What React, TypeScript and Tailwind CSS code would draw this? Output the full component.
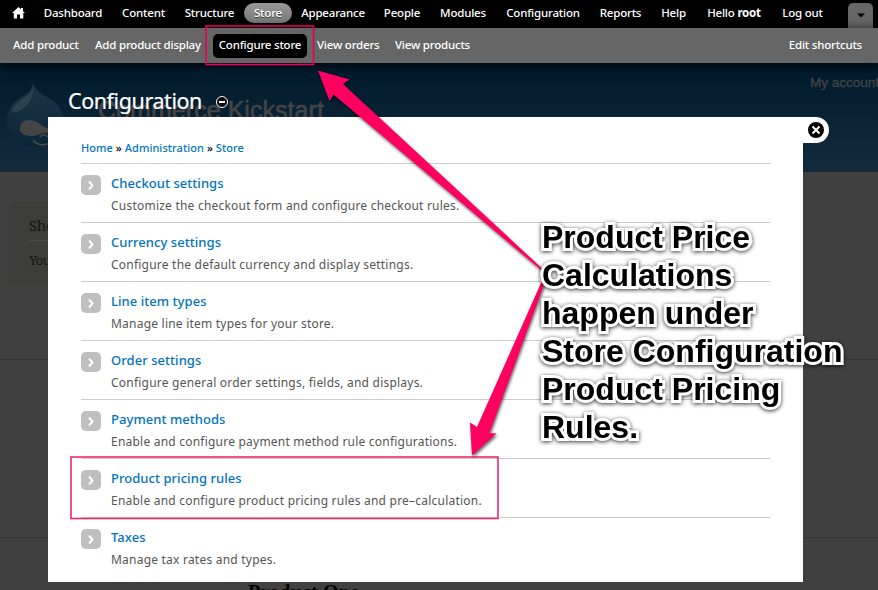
import React from "react";

const nav: [string, string][] = [
  ["Dashboard", "w-[78px]"],
  ["Content", "w-[63px]"],
  ["Structure", "w-[69px]"],
  ["Store", "w-[48px]"],
  ["Appearance", "w-[82px]"],
  ["People", "w-[56px]"],
  ["Modules", "w-[66px]"],
  ["Configuration", "w-[94px]"],
  ["Reports", "w-[61px]"],
  ["Help", "w-[45px]"],
];

const rows: [string, string][] = [
  ["Checkout settings", "Customize the checkout form and configure checkout rules."],
  ["Currency settings", "Configure the default currency and display settings."],
  ["Line item types", "Manage line item types for your store."],
  ["Order settings", "Configure general order settings, fields, and displays."],
  ["Payment methods", "Enable and configure payment method rule configurations."],
  ["Product pricing rules", "Enable and configure product pricing rules and pre–calculation."],
  ["Taxes", "Manage tax rates and types."],
];

const note = ["Product Price", "Calculations", "happen under", "Store Configuration", "Product Pricing", "Rules."];

function Toolbar() {
  return (
    <nav className="flex h-7 bg-black text-[11.5px] font-medium leading-[25px] tracking-[-0.2px] text-white">
      <div className="w-[34px] shrink-0 pl-3 pt-[7px]">
        <svg width="13" height="12" viewBox="0 0 13 12" fill="#fff">
          <path d="M6.5 0 L9 2.3 V1 H11 V4.2 L13 6 H11.3 V11.5 H8 V7.5 H5 V11.5 H1.8 V6 H0 Z" />
        </svg>
      </div>
      {nav.map(([label, width]) => (
        <div key={label} className={`${width} flex shrink-0 justify-center whitespace-nowrap`}>
          {label === "Store" ? (
            <span className="mt-[3px] h-5 w-12 rounded-full bg-gradient-to-b from-[#999] to-[#777] text-center leading-[19px] [text-shadow:0_1px_0_#444]">{label}</span>
          ) : (
            label
          )}
        </div>
      ))}
      <div className="w-[76px] shrink-0 whitespace-nowrap text-center">Hello <b>root</b></div>
      <div className="w-[61px] shrink-0 whitespace-nowrap text-center">Log out</div>
      <div className="ml-[15px] mt-[3px] flex h-[25px] w-[25px] shrink-0 items-center justify-center rounded-t-[5px] bg-[#666]">
        <svg width="8" height="5" viewBox="0 0 8 5"><path d="M0 .5H8L4 4.5Z" /></svg>
      </div>
    </nav>
  );
}

function Shortcuts() {
  return (
    <div className="relative flex h-[35px] items-center bg-[#666] pl-[13px] pr-4 text-[11.5px] font-medium leading-[22px] tracking-[-0.2px] text-white shadow-[0_2px_10px_rgba(0,0,0,0.9)]">
      <span className="h-6 w-[82px] whitespace-nowrap">Add product</span>
      <span className="h-6 w-[118px] whitespace-nowrap">Add product display</span>
      <span className="h-6 w-[94px] whitespace-nowrap rounded-[5px] bg-black text-center">Configure store</span>
      <span className="ml-[10px] h-6 w-[78px] whitespace-nowrap">View orders</span>
      <span className="h-6 whitespace-nowrap">View products</span>
      <span className="ml-auto h-6 whitespace-nowrap">Edit shortcuts</span>
    </div>
  );
}

function Druplicon() {
  return (
    <svg className="absolute left-[7px] top-[20px]" width="58" height="66" viewBox="0 0 58 66">
      <defs>
        <linearGradient id="drop" x1="0" y1="0" x2="0" y2="1">
          <stop offset="0" stopColor="#1c3547" />
          <stop offset="1" stopColor="#0b2538" />
        </linearGradient>
      </defs>
      <path d="M26 0C29 9 35 10 43 16C52 22 57 30 57 38C57 53 45 64 29 64C12 64 0 52 0 38C0 28 5 20 13 15C21 10 24 8 26 0Z" fill="url(#drop)" />
      <path d="M26 3C25 10 20 13 14 17C10 20 5 24 5 28C7 31 13 28 17 25C23 20 27 12 26 3Z" fill="#2d4250" />
      <path d="M22 37C30 37 33 42 39 45C43 46 48 44 51 47C54 51 47 55 43 51C37 47 32 53 24 53C16 53 12 49 13 45C13 40 16 37 22 37Z" fill="#454545" />
      <path d="M26 57C30 63 38 63 44 59M33 54C35 51 38 51 41 54" fill="none" stroke="#4a4a4a" strokeWidth="1.5" />
    </svg>
  );
}

function Backdrop() {
  return (
    <div className="flex h-[527px] flex-col overflow-hidden bg-[#404040]">
      <div className="relative h-[109px] shrink-0 bg-gradient-to-b from-[#001a2b] to-[#142b3e]">
        <Druplicon />
        <div className="absolute left-[98px] top-[32px] whitespace-nowrap font-['Liberation_Sans',sans-serif] text-[25px] leading-[30px] tracking-[0.05px] text-[#444] [-webkit-text-stroke:0.6px_#444]">Commerce Kickstart</div>
        <div className="absolute left-[810px] top-[11px] whitespace-nowrap font-['Liberation_Sans',sans-serif] text-[13.5px] leading-[17px] text-[#444] [-webkit-text-stroke:0.3px_#444]">My account</div>
      </div>
      <div className="ml-[9px] mt-[30px] h-[83px] w-[200px] shrink-0 bg-[#3d3d3c] pl-5 pt-3 font-['Noto_Serif','DejaVu_Serif',serif] text-[#151515]">
        <div className="border-b border-[#4a4a4a] pb-[3px] text-[15px] leading-[23px] tracking-[-0.3px]">Shopping cart</div>
        <div className="pt-[9px] text-[13px] leading-5 tracking-[-0.5px]">Your cart</div>
      </div>
      <div className="mt-[74px] h-[179px] shrink-0 border-y border-[#353535]" />
      <div className="ml-[248px] mt-[42px] shrink-0 font-['Liberation_Serif',serif] text-[20px] font-bold leading-6 tracking-[0.2px] text-black">Product One</div>
    </div>
  );
}

function Panel() {
  return (
    <main className="absolute left-[48px] top-[117px] h-[465px] w-[755px] bg-white px-[33px] pt-[21px]">
      <div className="h-[25px] text-[11px] font-medium leading-5 tracking-[0.06px] text-[#0074bd]">
        Home <span className="text-black">»</span> Administration <span className="text-black">»</span> Store
      </div>
      {rows.map(([title, text]) => (
        <div key={title} className="flex h-[59px] w-[689px] border-t border-[#ccc] pt-[11px]">
          <span className="flex h-5 w-5 shrink-0 items-center justify-center rounded-[5px] bg-[#bfbfbf]">
            <svg width="6" height="9" viewBox="0 0 6 9"><path d="M1 .5L4.5 4.5L1 8.5" fill="none" stroke="#fff" strokeWidth="2" /></svg>
          </span>
          <div className="-mt-[2px] ml-[10px] whitespace-nowrap">
            <div className="text-[13px] font-medium leading-[20px] tracking-[0.05px] text-[#0074bd]">{title}</div>
            <div className="mt-[3px] text-[12px] leading-[19px] tracking-[0.22px] text-[#555]">{text}</div>
          </div>
        </div>
      ))}
    </main>
  );
}

function Annotations() {
  return (
    <>
      <svg className="absolute left-0 top-0" width="878" height="590" viewBox="0 0 878 590">
        <g fill="none" stroke="#e6005c" strokeWidth="1.6">
          <rect x="206" y="26" width="107.5" height="38.5" />
          <rect x="71" y="457" width="427" height="61.5" stroke="#f5266f" />
        </g>
        <g fill="#ff0060" className="drop-shadow-[1px_2px_1.5px_rgba(0,0,0,0.6)]">
          <path d="M318 70.5L349.5 79.5L343 84L547 273L541 270L333.500 94.500L329.500 101Z" />
          <path d="M472 455.500L470 422.500L477 427L541 283L546 279L489.500 433L496.500 433.500Z" />
        </g>
      </svg>
      <div className="absolute left-[542px] top-[218px] whitespace-nowrap font-['Liberation_Sans',sans-serif] text-[32px] font-bold leading-[38px] text-black [-webkit-text-stroke:6px_white] [paint-order:stroke_fill] drop-shadow-[0_1px_2px_rgba(0,0,0,0.8)]">
        {note.map((line) => <div key={line}>{line}</div>)}
      </div>
    </>
  );
}

export default function App() {
  return (
    <div className="relative h-[590px] w-[878px] overflow-hidden bg-[#404040] font-['Noto_Sans','Open_Sans',sans-serif]">
      <div className="relative z-10"><Toolbar /><Shortcuts /></div>
      <Backdrop />
      <h1 className="absolute left-[68px] top-[85px] whitespace-nowrap text-[21.5px] leading-8 tracking-[-0.42px] text-white [-webkit-text-stroke:0.2px_white]">Configuration</h1>
      <svg className="absolute left-[215px] top-[95px]" width="14" height="14" viewBox="0 0 14 14"><circle cx="7" cy="7" r="5.5" stroke="#fff" /><path d="M4 7H10" stroke="#fff" strokeWidth="2" /></svg>
      <Panel />
      <div className="absolute left-[803px] top-[117px] flex h-[26px] w-[26px] items-center rounded-r-full bg-white pl-[5px]">
        <svg width="16" height="16" viewBox="0 0 16 16"><circle cx="8" cy="8" r="8" /><path d="M4.500 4.500L11.500 11.500M11.500 4.500L4.500 11.500" stroke="#fff" strokeWidth="2" /></svg>
      </div>
      <div className="absolute left-0 top-0 z-20"><Annotations /></div>
    </div>
  );
}
